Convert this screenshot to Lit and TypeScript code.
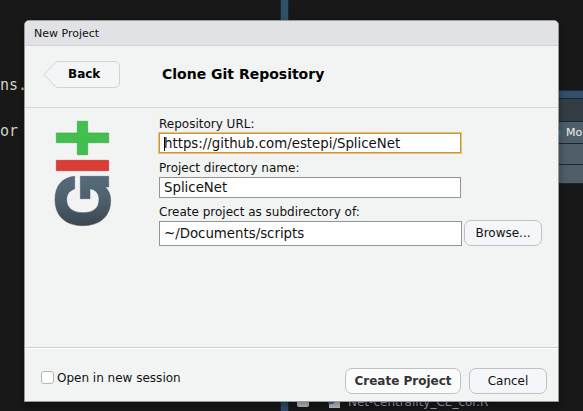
import { LitElement, html, css } from "lit";
import { customElement, state } from "lit/decorators.js";

@customElement("git-logo")
class GitLogo extends LitElement {
  static styles = css`
    :host { display: block; width: 60px; height: 108px; }
    svg { display: block; }
  `;
  render() {
    return html`<svg width="60" height="108" viewBox="39 30 180 324">
      <defs>
        <linearGradient id="slate" x1="0" y1="0" x2="0" y2="1">
          <stop offset="0" stop-color="#566b7a" />
          <stop offset="0.45" stop-color="#4f616e" />
          <stop offset="1" stop-color="#3c464f" />
        </linearGradient>
      </defs>
      <path d="M112 34H143V69H206V98H143V134H112V98H49V69H112Z" fill="#43bf4d" stroke="#38a943" stroke-width="2" stroke-linejoin="round" />
      <rect x="49" y="151" width="157" height="31" rx="1" fill="#d93d33" stroke="#c2332b" stroke-width="2" />
      <path d="M104 199C66 202 45 229 45 268C45 319 77 347 128 347C182 347 212 318 212 271C212 255 206 239 195 231H206V199H121V266H150V236C168 239 177 251 177 269C177 295 159 308 129 308C99 308 80 294 80 269C80 251 90 241 104 237Z"
        fill="url(#slate)" stroke="#43515c" stroke-width="1.5" stroke-linejoin="round" />
    </svg>`;
  }
}

@customElement("new-project-dialog")
class NewProjectDialog extends LitElement {
  static styles = css`
    :host {
      display: flex; flex-direction: column; box-sizing: border-box;
      width: 535px; height: 382px; border: 1px solid #999b9b; border-radius: 5px 5px 0 0;
      background: #f2f4f4; color: #111; overflow: hidden;
      font: 12px/14px "DejaVu Sans", sans-serif; white-space: nowrap;
    }
    .caption { box-sizing: border-box; height: 25px; padding: 6px 9px 0; background: #e1e2e6; border-bottom: 1px solid #d3d5d7; font-size: 11px; }
    .header { box-sizing: border-box; height: 62px; display: flex; align-items: center; padding: 0 0 5px 18px; border-bottom: 1px solid #d4d6d6; }
    .back { position: relative; width: 77px; height: 28px; display: flex; align-items: center; }
    .back svg { position: absolute; left: 0; top: 1px; }
    .back span { position: relative; margin-left: 25px; font-weight: bold; color: #000; }
    h1 { margin: 0 0 0 42px; font-size: 14px; line-height: 16px; color: #000; }
    .content { flex: 1; display: flex; padding: 9px 16px 0 28px; }
    git-logo { margin-top: 3px; }
    .form { margin-left: 46px; display: flex; flex-direction: column; }
    .field { box-sizing: border-box; width: 302px; height: 21px; border: 1px solid #929596; background: #fff; padding: 0 0 0 4px; display: flex; align-items: center; font-size: 13.33px; line-height: 16px; color: #111; }
    .field.active { border-color: #c4964a; box-shadow: 0 0 0 1px #edc16c; }
    .caret { width: 1px; height: 14px; background: #000; margin-right: -1px; }
    .url { height: 20px; margin: 2px 0 8px; padding-top: 1px; }
    .name { margin: 2px 0 7px; }
    .label { height: 14px; }
    .path { width: 303px; height: 25px; padding-top: 2px; }
    .row { display: flex; align-items: center; gap: 2px; margin-top: 1px; }
    .button { box-sizing: border-box; height: 26px; border: 1px solid #bfc2c4; border-radius: 7px; background: #f5f6f9; display: flex; justify-content: center; align-items: center; color: #111; }
    .browse { width: 78px; }
    .footer { box-sizing: border-box; height: 54px; border-top: 1px solid #cdd0d0; box-shadow: inset 0 1px #fff; display: flex; align-items: center; padding: 12px 11px 0 16px; }
    .check { box-sizing: border-box; width: 13px; height: 13px; border: 1px solid #b2b6b6; border-radius: 3px; background: #fff; margin: -6px 3px 0 0; }
    .session { flex: 1; margin-top: -6px; }
    .create { width: 116px; margin-right: 8px; font-weight: bold; color: #333; background: #fafbfb; }
    .cancel { width: 78px; }
  `;
  @state() url = "https://github.com/estepi/SpliceNet";
  @state() name = "SpliceNet";
  @state() path = "~/Documents/scripts";
  render() {
    return html`
      <div class="caption">New Project</div>
      <div class="header">
        <div class="back">
          <svg width="77" height="28" viewBox="0 0 77 28"><path d="M1 13.5L12.5 1.5Q13.5.5 15 .5H71Q76.5.5 76.5 6V21Q76.5 26.5 71 26.5H15Q13.5 26.5 12.5 25.5Z" fill="#f4f5f6" stroke="#d0d3d3" /></svg>
          <span>Back</span>
        </div>
        <h1>Clone Git Repository</h1>
      </div>
      <div class="content">
        <git-logo></git-logo>
        <div class="form">
          <div class="label">Repository URL:</div>
          <div class="field active url"><i class="caret"></i>${this.url}</div>
          <div class="label">Project directory name:</div>
          <div class="field name">${this.name}</div>
          <div class="label">Create project as subdirectory of:</div>
          <div class="row">
            <div class="field path">${this.path}</div>
            <div class="button browse">Browse...</div>
          </div>
        </div>
      </div>
      <div class="footer">
        <i class="check"></i><span class="session">Open in new session</span>
        <div class="button create">Create Project</div>
        <div class="button cancel">Cancel</div>
      </div>`;
  }
}

@customElement("app-root")
class AppRoot extends LitElement {
  static styles = css`
    :host { display: block; position: relative; width: 583px; height: 411px; overflow: hidden; background: #181818; }
    .workspace { display: grid; grid-template-columns: 280px 9px 294px; height: 411px; }
    .code { padding-top: 74px; font: 15px/23px "DejaVu Sans Mono", monospace; color: #d5d0c5; white-space: pre; }
    .splitter { box-sizing: border-box; background: #315069; border: solid #102a3d; border-width: 0 1px; }
    .side { display: flex; flex-direction: column; }
    .bar { box-sizing: border-box; border-bottom: 1px solid #14283a; background: #4f5e69; }
    .split { height: 9px; margin-top: 90px; background: #345069; border-top: 1px solid #18314b; }
    .tabs { height: 23px; background: #343d45; }
    .tools { height: 22px; padding-left: 268px; display: flex; align-items: center; font: 11px "DejaVu Sans", sans-serif; color: #eee; }
    .spark { width: 4px; height: 4px; background: #168baa; }
    .more { margin-left: 5px; }
    .filters { height: 21px; }
    .heads { height: 19px; }
    .file { display: flex; align-items: flex-end; height: 26px; margin-top: auto; padding: 0 0 2px 8px; font: 12px/14px "DejaVu Sans", sans-serif; color: #a3a5c6; }
    .mark { width: 12px; height: 12px; border-radius: 2px; background: #c3c9d0; margin: 0 18px 2px 0; }
    .doc { margin-right: 7px; }
    .over { position: absolute; left: 24px; top: 20px; box-shadow: 0 4px 8px #0006; }
  `;
  render() {
    return html`
      <div class="workspace">
        <div class="code">ns.

or</div>
        <div class="splitter"></div>
        <div class="side">
          <div class="bar split"></div>
          <div class="bar tabs"></div>
          <div class="bar tools"><i class="spark"></i><span class="more">Mo</span></div>
          <div class="bar filters"></div>
          <div class="bar heads"></div>
          <div class="file"><i class="mark"></i>
            <svg class="doc" width="14" height="16"><path d="M2 0H13V15H2Z" fill="#c5c8cc" /><circle cx="4" cy="7" r="4" fill="#4a68a8" /></svg>
            <span>Net-centrality_CE_cor.R</span>
          </div>
        </div>
      </div>
      <new-project-dialog class="over"></new-project-dialog>`;
  }
}
